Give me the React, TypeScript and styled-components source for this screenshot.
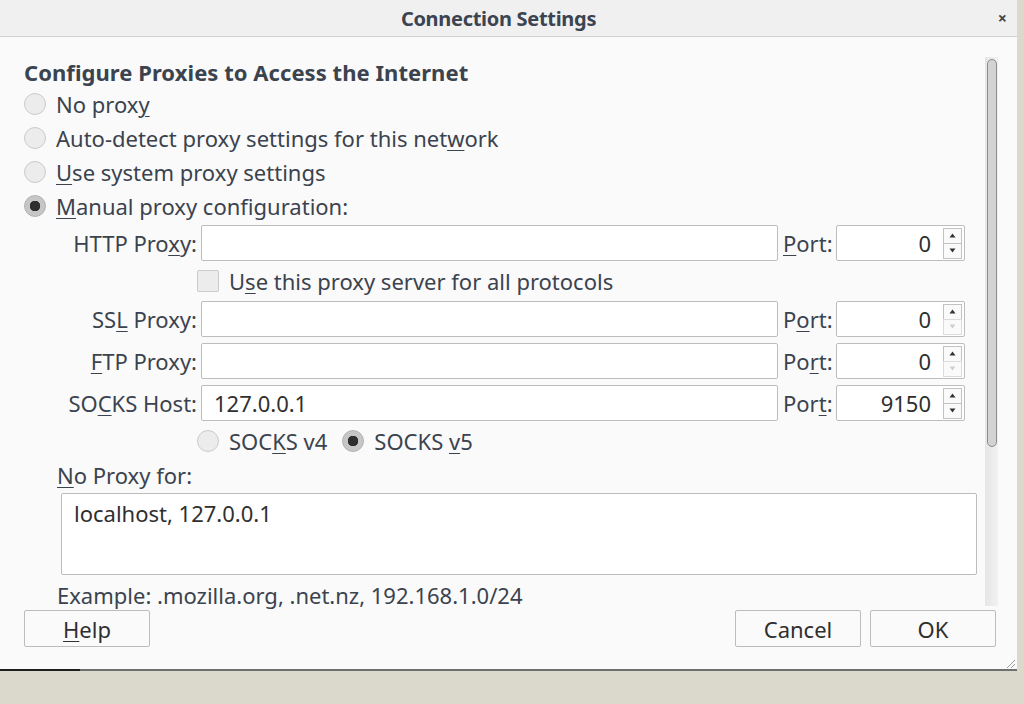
import React from "react";
import styled, { createGlobalStyle } from "styled-components";

const Global = createGlobalStyle`
  html, body { margin: 0; padding: 0; background: #dbd8cc; }
  body { font-family: "Noto Sans", "Open Sans", sans-serif; color: #3a434e; }
  * { box-sizing: border-box; }
`;

const Window = styled.div`
  width: 1017px;
  height: 671px;
  background: #fafafa;
  border-bottom: 2px solid #6f6f6f;
  display: flex;
  flex-direction: column;
  position: relative;
`;

const BottomDark = styled.div`
  position: absolute;
  left: 0;
  bottom: -2px;
  width: 80px;
  height: 2px;
  background: #1e1e1e;
`;

const TitleBar = styled.div`
  height: 37px;
  flex: none;
  background: #f0f0f0;
  border-bottom: 1px solid #cfcfcf;
  display: grid;
  grid-template-columns: 1fr auto 1fr;
  align-items: center;
`;

const Title = styled.div`
  grid-column: 2;
  font-weight: 700;
  font-size: 20px;
  color: #3b4450;
  letter-spacing: -0.3px;
  transform: translateX(-10px);
`;

const Close = styled.div`
  grid-column: 3;
  justify-self: end;
  margin-right: 10px;
  font-size: 16px;
  font-weight: 700;
  color: #444;
  line-height: 1;
`;

const Main = styled.div`
  height: 571px;
  flex: none;
  display: flex;
`;

const Content = styled.div`
  flex: 1;
  padding: 19px 0 0 24px;
  display: flex;
  flex-direction: column;
  & > * { flex-shrink: 0; }
`;

const Heading = styled.div`
  height: 31px;
  font-size: 22px;
  font-weight: 700;
  display: flex;
  align-items: center;
  letter-spacing: 0.05px;
`;

const Choice = styled.label<{ $h?: number }>`
  height: ${(p) => p.$h ?? 34}px;
  display: flex;
  align-items: center;
  gap: 10px;
  font-size: 22px;
  white-space: nowrap;
`;

const Radio = styled.span<{ $on?: boolean }>`
  width: 22px;
  height: 22px;
  flex: none;
  border-radius: 50%;
  border: 1px solid ${(p) => (p.$on ? "#b2b2b2" : "#cbcbcb")};
  background: ${(p) =>
    p.$on
      ? "radial-gradient(circle, #2e2e2e 0 5px, #c6c6c6 5.5px)"
      : "#ececec"};
`;

const Check = styled.span`
  width: 22px;
  height: 22px;
  flex: none;
  border-radius: 2px;
  border: 1px solid #cbcbcb;
  background: #ececec;
`;

const Key = styled.span`
  text-decoration: underline;
  text-underline-offset: 3px;
  text-decoration-thickness: 1px;
`;

const ProxyGrid = styled.div`
  margin-top: 2px;
  display: grid;
  grid-template-columns: 173px 577px 50px 129px;
  column-gap: 4px;
  row-gap: 6px;
  align-items: center;
`;

const FieldLabel = styled.div`
  font-size: 22px;
  text-align: right;
  white-space: nowrap;
`;

const PortLabel = styled.div`
  font-size: 22px;
  white-space: nowrap;
  padding-left: 1px;
`;

const TextBox = styled.div`
  height: 36px;
  background: #fff;
  border: 1px solid #bdbdbd;
  border-radius: 2px;
  font-size: 22px;
  display: flex;
  align-items: center;
  padding-left: 12px;
  color: #2f2f2f;
`;

const Spin = styled.div`
  height: 36px;
  background: #fff;
  border: 1px solid #bdbdbd;
  border-radius: 2px;
  display: flex;
  align-items: center;
  justify-content: flex-end;
  padding-right: 2px;
  gap: 12px;
  font-size: 22px;
  color: #2f2f2f;
`;

const SpinButtons = styled.div`
  display: flex;
  flex-direction: column;
  width: 19px;
`;

const SpinBtn = styled.div<{ $off?: boolean }>`
  height: 16px;
  border: 1px solid ${(p) => (p.$off ? "#dcdcdc" : "#c2c2c2")};
  background: #fafafa;
  display: flex;
  align-items: center;
  justify-content: center;
  & + & { margin-top: -1px; }
  svg { fill: ${(p) => (p.$off ? "#cfcfcf" : "#333")}; }
`;

const Span2 = styled.div`
  grid-column: 2 / span 3;
  height: 28px;
  display: flex;
  align-items: center;
  gap: 10px;
  font-size: 22px;
  margin-left: -4px;
`;

const Versions = styled.div`
  grid-column: 2 / span 3;
  height: 28px;
  display: flex;
  align-items: center;
  margin-left: -4px;
  gap: 15px;
`;

const Indented = styled.div`
  padding-left: 33px;
  display: flex;
  flex-direction: column;
`;

const SubLabel = styled.div<{ $mt: number }>`
  margin-top: ${(p) => p.$mt}px;
  height: 28px;
  line-height: 28px;
  display: flex;
  align-items: center;
  font-size: 22px;
  white-space: nowrap;
`;

const Area = styled.div`
  margin-top: 4px;
  margin-left: 4px;
  width: 916px;
  height: 82px;
  background: #fff;
  border: 1px solid #bdbdbd;
  border-radius: 2px;
  padding: 4px 12px;
  font-size: 22px;
  color: #2f2f2f;
  line-height: 30px;
`;

const Scroll = styled.div`
  width: 13px;
  flex: none;
  margin: 20px 19px 0 0;
  height: 549px;
  background: linear-gradient(to right, #e6e6e6, #f1f1f1);
  padding: 2px 0 0 2px;
`;

const Thumb = styled.div`
  width: 10px;
  height: 388px;
  border: 1px solid #8c8c8c;
  border-radius: 5px;
  background: #d3d3d3;
`;

const Footer = styled.div`
  flex: 1;
  padding: 2px 21px 0 24px;
  display: flex;
  align-items: flex-start;
  gap: 9px;
  position: relative;
`;

const Button = styled.div<{ $push?: boolean }>`
  width: 126px;
  height: 37px;
  background: #fafafa;
  border: 1px solid #bcbcbc;
  border-radius: 2px;
  display: flex;
  align-items: center;
  justify-content: center;
  font-size: 22px;
  color: #2f2f2f;
  margin-left: ${(p) => (p.$push ? "auto" : "0")};
`;

const Grip = styled.svg`
  position: absolute;
  right: 1px;
  bottom: 0;
`;

const Up = () => (
  <svg width="7" height="5" viewBox="0 0 7 5"><path d="M3.5 0.5 L6.5 4.5 L0.5 4.5 Z" /></svg>
);
const Down = () => (
  <svg width="7" height="5" viewBox="0 0 7 5"><path d="M0.5 0.5 L6.5 0.5 L3.5 4.5 Z" /></svg>
);

const Spinner = ({ value, downOff }: { value: string; downOff?: boolean }) => (
  <Spin>
    {value}
    <SpinButtons>
      <SpinBtn><Up /></SpinBtn>
      <SpinBtn $off={downOff}><Down /></SpinBtn>
    </SpinButtons>
  </Spin>
);

export default function App() {
  return (
    <>
      <Global />
      <Window>
        <TitleBar>
          <Title>Connection Settings</Title>
          <Close>×</Close>
        </TitleBar>
        <Main>
          <Content>
            <Heading>Configure Proxies to Access the Internet</Heading>
            <Choice><Radio /><span>No prox<Key>y</Key></span></Choice>
            <Choice><Radio /><span>Auto-detect proxy settings for this net<Key>w</Key>ork</span></Choice>
            <Choice><Radio /><span><Key>U</Key>se system proxy settings</span></Choice>
            <Choice><Radio $on /><span><Key>M</Key>anual proxy configuration:</span></Choice>
            <ProxyGrid>
              <FieldLabel>HTTP Pro<Key>x</Key>y:</FieldLabel>
              <TextBox />
              <PortLabel><Key>P</Key>ort:</PortLabel>
              <Spinner value="0" />

              <Span2><Check /><span>U<Key>s</Key>e this proxy server for all protocols</span></Span2>

              <FieldLabel>SS<Key>L</Key> Proxy:</FieldLabel>
              <TextBox />
              <PortLabel>P<Key>o</Key>rt:</PortLabel>
              <Spinner value="0" downOff />

              <FieldLabel><Key>F</Key>TP Proxy:</FieldLabel>
              <TextBox />
              <PortLabel>Po<Key>r</Key>t:</PortLabel>
              <Spinner value="0" downOff />

              <FieldLabel>SO<Key>C</Key>KS Host:</FieldLabel>
              <TextBox>127.0.0.1</TextBox>
              <PortLabel>Por<Key>t</Key>:</PortLabel>
              <Spinner value="9150" />

              <Versions>
                <Choice $h={28}><Radio /><span>SOC<Key>K</Key>S v4</span></Choice>
                <Choice $h={28}><Radio $on /><span>SOCKS <Key>v</Key>5</span></Choice>
              </Versions>
            </ProxyGrid>
            <Indented>
              <SubLabel $mt={6}><span><Key>N</Key>o Proxy for:</span></SubLabel>
              <Area>localhost, 127.0.0.1</Area>
              <SubLabel $mt={6}>Example: .mozilla.org, .net.nz, 192.168.1.0/24</SubLabel>
            </Indented>
          </Content>
          <Scroll><Thumb /></Scroll>
        </Main>
        <Footer>
          <Button><span><Key>H</Key>elp</span></Button>
          <Button $push>Cancel</Button>
          <Button>OK</Button>
          <Grip width="12" height="12" viewBox="0 0 12 12">
            <path d="M11 3 L3 11 M11 7 L7 11" stroke="#9a9a9a" strokeWidth="1" />
          </Grip>
        </Footer>
        <BottomDark />
      </Window>
    </>
  );
}
